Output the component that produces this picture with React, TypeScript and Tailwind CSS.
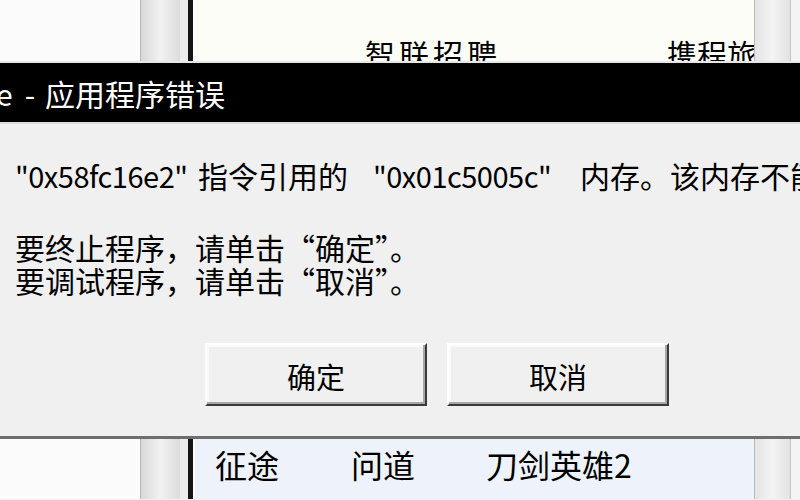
import React from 'react';

// Shared font stacks — the screenshot is an old Windows dialog, the CJK
// glyphs are closest to Noto Sans CJK SC.
const CJK = "font-['Noto_Sans_CJK_SC',sans-serif]";

// Classic raised Win32 button: white highlight on top/left, dark shade on
// bottom/right with a softer inner shade.
const BUTTON =
  'w-[222px] h-[63px] pt-[3px] flex items-center justify-center bg-[#f0f0f0] border-2 border-t-white border-l-white border-r-[#3a3a3a] border-b-[#3a3a3a] shadow-[inset_-2px_-2px_0_#a6a6a6,inset_2px_2px_0_#fafafa] text-[29px] text-black leading-none';

function Scrollbar({ width, light }: { width: string; light?: boolean }) {
  return (
    <div
      className={`${width} h-full shrink-0 border-l border-[#b8b8b8] ${
        light
          ? 'bg-gradient-to-r from-[#e4e4e4] via-[#f4f4f4] to-[#e2e2e2]'
          : 'bg-gradient-to-r from-[#d8d8d8] via-[#f2f2f2] to-[#dcdcdc]'
      }`}
    />
  );
}

// The window strip that peeks out above and below the dialog.
function BackWindow({
  height,
  panelBg,
  children,
}: {
  height: string;
  panelBg: string;
  children: React.ReactNode;
}) {
  return (
    <div className={`${height} flex w-full overflow-hidden`}>
      <div className="w-[140px] h-full shrink-0 bg-[#fbfbfb]" />
      <Scrollbar width="w-[40px]" />
      <div className="w-[8px] h-full shrink-0 bg-[#ececec]" />
      <div className="w-[5px] h-full shrink-0 bg-[#141414]" />
      <div className="w-[2px] h-full shrink-0 bg-white" />
      <div className={`w-[559px] h-full shrink-0 overflow-hidden ${panelBg}`}>
        {children}
      </div>
      <Scrollbar width="w-[36px]" light />
      <div className="w-[10px] h-full shrink-0 border-l border-[#c4c4c4] bg-[#f4f4f4]" />
    </div>
  );
}

export default function App() {
  return (
    <div className={`w-[800px] h-[500px] overflow-hidden bg-[#f0f0f0] ${CJK}`}>
      {/* window behind, top edge */}
      <div className="h-[63px] border-b-2 border-[#e6e6e6]">
        <BackWindow height="h-[61px]" panelBg="bg-[#fdfdf8]">
          <div className="flex pt-[38px] text-[30px] leading-none text-black whitespace-nowrap">
            <span className="ml-[170px] w-[302px] shrink-0 tracking-[4px]">智联招聘</span>
            <span className="shrink-0">携程旅行</span>
          </div>
        </BackWindow>
      </div>

      {/* title bar */}
      <div className="h-[61px] bg-black flex items-center text-white text-[30px] leading-none whitespace-nowrap border-b-2 border-[#dcdcdc]">
        <span className="-ml-[4px]">e</span>
        <span className="ml-[12px]">-</span>
        <span className="ml-[10px]">应用程序错误</span>
      </div>

      {/* dialog body */}
      <div className="h-[312px] bg-[#f0f0f0] pl-[15px] pt-[33px] text-black whitespace-nowrap overflow-hidden">
        <div className="h-[36px] flex items-center text-[30px] leading-none">
          <span className="w-[183px] shrink-0 text-[29px] tracking-[-0.5px]">"0x58fc16e2"</span>
          <span className="w-[175px] shrink-0">指令引用的</span>
          <span className="w-[207px] shrink-0 text-[29px] tracking-[-0.5px]">"0x01c5005c"</span>
          <span className="shrink-0">内存。该内存不能为“read”。</span>
        </div>
        <div className="mt-[38px] text-[30px] leading-[33px]">
          <div>要终止程序，请单击“确定”。</div>
          <div>要调试程序，请单击“取消”。</div>
        </div>
        <div className="mt-[46px] ml-[190px] flex gap-[20px]">
          <button className={BUTTON}>确定</button>
          <button className={BUTTON}>取消</button>
        </div>
      </div>

      {/* dialog bottom edge */}
      <div className="h-[3px] bg-[#6e6e6e]" />

      {/* window behind, bottom edge */}
      <BackWindow height="h-[60px]" panelBg="bg-[#eef3fb]">
        <div className="flex pl-[20px] pt-[9px] text-[32px] leading-none text-black whitespace-nowrap">
          <span className="w-[136px] shrink-0">征途</span>
          <span className="w-[135px] shrink-0">问道</span>
          <span className="shrink-0">刀剑英雄2</span>
        </div>
      </BackWindow>
    </div>
  );
}
